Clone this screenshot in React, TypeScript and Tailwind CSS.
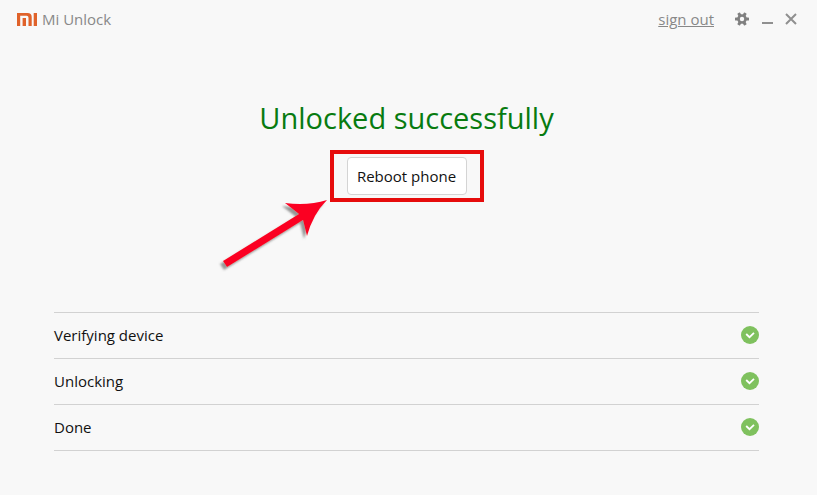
interface Step { id: number; name: string; }

const STEPS: Step[] = [
  { id: 1, name: 'Verifying device' },
  { id: 2, name: 'Unlocking' },
  { id: 3, name: 'Done' },
];

const MiLogo = () => (
  <svg width="20" height="13" viewBox="0 0 20 13" fill="#e0622a" aria-hidden="true">
    <path d="M0 0h10.500Q14.700 0 14.700 4v9h-3.200V4.800Q11.500 2.800 9.600 2.800H3.200V13H0z" />
    <path d="M5.600 5h3.400v8H5.600zM16.700 0H20v13h-3.300z" />
  </svg>
);

const GearIcon = () => (
  <svg width="14" height="14" viewBox="0 0 14 14" aria-hidden="true">
    <g fill="#808080">
      <rect x="5.5" y="0" width="3" height="14" rx="0.6" transform="rotate(30 7 7)" />
      <rect x="5.5" y="0" width="3" height="14" rx="0.6" transform="rotate(90 7 7)" />
      <rect x="5.5" y="0" width="3" height="14" rx="0.6" transform="rotate(150 7 7)" />
      <circle cx="7" cy="7" r="4.800" />
    </g>
    <circle cx="7" cy="7" r="2.2" fill="#f8f8f8" />
  </svg>
);

const CheckIcon = () => (
  <svg width="18" height="18" viewBox="0 0 18 18" role="img" aria-label="Complete">
    <circle cx="9" cy="9" r="9" fill="#7fc15e" />
    <path d="M5.200 8l3.300 3.200 4.500-4.400" fill="none" stroke="#fff" strokeWidth="1.8" />
  </svg>
);

const Arrow = () => (
  <svg width="114" height="76" viewBox="0 0 114 76" className="absolute right-full top-[42px] mr-1" aria-hidden="true">
    <defs>
      <filter id="arrow-shadow" x="-10%" y="-10%" width="120%" height="120%">
        <feDropShadow dx="-3" dy="3" stdDeviation="1" floodColor="#555" floodOpacity="0.6" />
      </filter>
    </defs>
    <path
      d="M111 4Q97 18 91 40L87 24L11 71L7 65L83 18L69 7Q92 10 111 4z"
      fill="#fb0524"
      filter="url(#arrow-shadow)"
    />
  </svg>
);

export default function App() {
  return (
    <div className="min-h-screen bg-[#f8f8f8] font-['Open_Sans',sans-serif] text-[15px] leading-5 text-[#111]">
      <header className="flex h-[38px] items-center justify-between pl-[17px] pr-5 text-[#888]">
        <div className="flex items-center gap-[5px]">
          <MiLogo />
          <span>Mi Unlock</span>
        </div>
        <div className="flex items-center">
          <a href="#" className="mr-[21px] underline">sign out</a>
          <button aria-label="Settings" className="mr-3"><GearIcon /></button>
          <button aria-label="Minimize" className="mr-3">
            <svg width="12" height="12" viewBox="0 0 12 12" aria-hidden="true">
              <path d="M1 10h11" stroke="#909090" strokeWidth="2" />
            </svg>
          </button>
          <button aria-label="Close">
            <svg width="12" height="12" viewBox="0 0 12 12" aria-hidden="true">
              <path d="M1 1l10 10M11 1L1 11" stroke="#909090" strokeWidth="2" />
            </svg>
          </button>
        </div>
      </header>

      <main className="pl-[54px] pr-[58px]">
        <div className="flex flex-col items-center pt-[60px]">
          <h1 className="text-[29px] leading-10 text-[#087b10]">Unlocked successfully</h1>
          <div className="relative mt-3 border-4 border-[#e60c0c] px-[13px] py-[3px]">
            <button className="h-[38px] w-[120px] rounded border border-[#d4d4d4] bg-white">Reboot phone</button>
            <Arrow />
          </div>
        </div>

        {/* Progress steps */}
        <ul className="mt-[110px] border-t border-[#d2d2d2]">
          {STEPS.map(s => (
            <li key={s.id} className="flex h-[46px] items-center justify-between border-b border-[#d2d2d2] pb-0.5">
              <span>{s.name}</span>
              <CheckIcon />
            </li>
          ))}
        </ul>
      </main>
    </div>
  );
}
